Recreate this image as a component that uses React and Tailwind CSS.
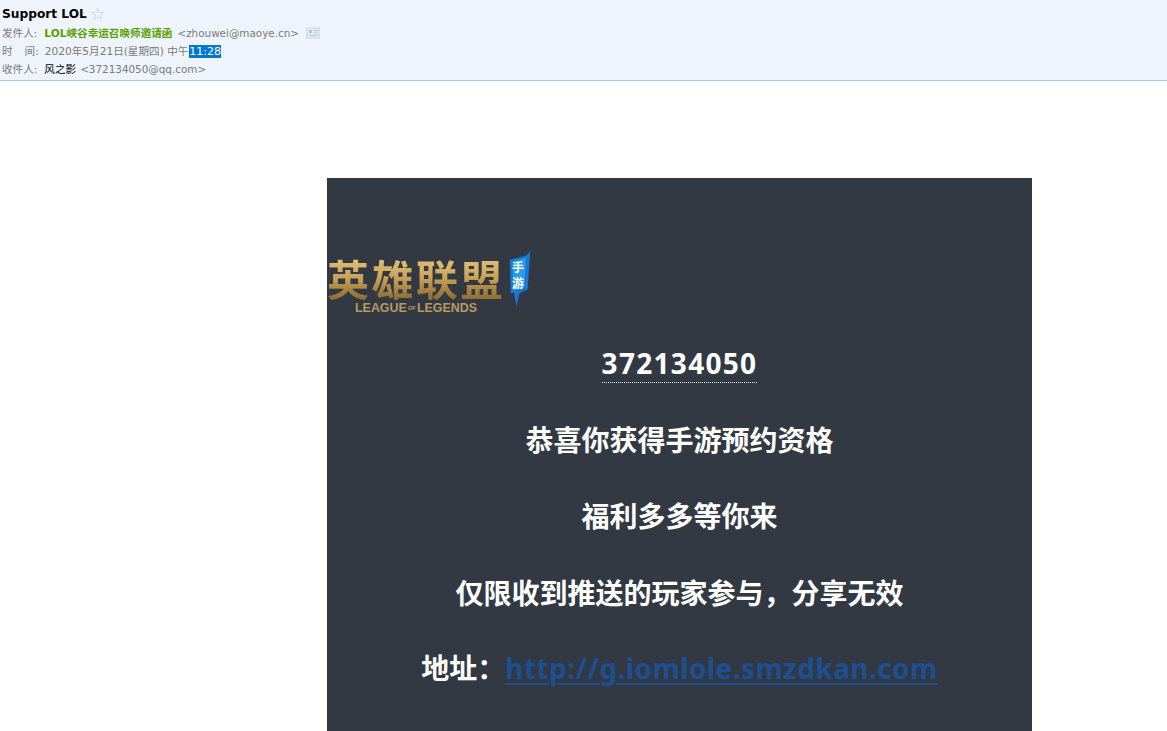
import React from 'react';

function Logo() {
  return (
    <div className="flex items-start h-[62px]">
      <div className="flex flex-col items-center w-[178px]">
        <div className="text-[42px] leading-[44px] font-bold whitespace-nowrap tracking-[2.5px] mt-[3px] bg-gradient-to-b from-[#e3c67c] via-[#c9a257] to-[#8c6a32] bg-clip-text text-transparent font-['Noto_Sans_CJK_SC',sans-serif]">
          英雄联盟
        </div>
        <div className="flex items-center text-[12.4px] leading-[14px] font-bold text-[#b89a60] whitespace-nowrap font-['Liberation_Sans',sans-serif] mt-[1px]">
          LEAGUE<span className="text-[6px] mx-[1px]">OF</span>LEGENDS
        </div>
      </div>
      <div className="relative w-[26px] h-[62px]">
        <svg width="22" height="56" viewBox="0 0 26 58" preserveAspectRatio="none" className="ml-[4px] mt-[-2px]">
          <path d="M1 9 L20 5 L25 0 L22 40 L12 44 L9 58 L6 43 L2 44 Z" fill="#1878d4" />
          <path d="M4 11 L20 7 L18 38 L5 41 Z" fill="#2a9be8" />
        </svg>
        <div className="absolute left-[6px] top-[6px] w-[14px] text-[12px] leading-[16px] font-bold text-white text-center font-['Noto_Sans_CJK_SC',sans-serif]">
          手<br />游
        </div>
      </div>
    </div>
  );
}

export default function App() {
  return (
    <div className="h-[731px] overflow-hidden bg-white">
      <header className="h-[81px] bg-[#eff4fc] border-b border-[#a9c6e4] pl-[2px] pt-[5px] text-[10.6px] leading-[18px] text-[#7a7a7a] font-['DejaVu_Sans','Noto_Sans_CJK_SC',sans-serif]">
        <div className="flex items-center h-[17px] mb-[2px] text-[12.2px] font-bold text-black">
          Support LOL
          <span className="ml-[3px] text-[17.5px] font-normal text-[#c4c8cf]">☆</span>
        </div>
        <div className="flex items-center h-[18px] whitespace-nowrap">
          <span>发件人:</span>
          <span className="ml-[7px] font-bold text-[#5aa000]">LOL峡谷幸运召唤师邀请函</span>
          <span className="ml-[5px] text-[10.4px]">&lt;zhouwei@maoye.cn&gt;</span>
          <svg width="14" height="12" viewBox="0 0 14 12" className="ml-[7px]">
            <rect x="1" y="1" width="12" height="10" fill="#e4ecf6" stroke="#c3d2e4" />
            <rect x="3" y="3" width="3" height="3" fill="#b3c5da" />
            <path d="M7.5 3.5h4M7.5 6h4M3 8.5h8.5" stroke="#b3c5da" />
          </svg>
        </div>
        <div className="flex items-center h-[18px] whitespace-nowrap">
          <span>时</span>
          <span className="ml-[12px]">间:</span>
          <span className="ml-[6px]">2020年5月21日(星期四) 中午</span>
          <span className="ml-[1px] bg-[#0078d0] text-white leading-[13px] text-[11px]">11:28</span>
        </div>
        <div className="flex items-center h-[17px] whitespace-nowrap">
          <span>收件人:</span>
          <span className="ml-[7px] text-black">风之影</span>
          <span className="ml-[4px] text-[10.4px]">&lt;372134050@qq.com&gt;</span>
        </div>
      </header>

      <main className="ml-[327px] pt-[97px]">
        <section className="w-[705px] h-[553px] bg-[#323943] pt-[75px] text-white text-[28px] font-bold text-center font-['Noto_Sans','Noto_Sans_CJK_SC',sans-serif]">
          <Logo />
          <div className="flex flex-col items-center mt-[30px] leading-[42px]">
            <span className="border-b border-dotted border-[#eceef0] leading-[37px] tracking-[1.3px]">372134050</span>
            <p className="mt-[36px]">恭喜你获得手游预约资格</p>
            <p className="mt-[34px]">福利多多等你来</p>
            <p className="mt-[35px]">仅限收到推送的玩家参与，分享无效</p>
            <p className="mt-[33px] whitespace-nowrap">
              地址：<a href="#" className="text-[#1d4f94] underline decoration-2 underline-offset-4 tracking-[0.4px]">http://g.iomlole.smzdkan.com</a>
            </p>
          </div>
        </section>
      </main>
    </div>
  );
}
